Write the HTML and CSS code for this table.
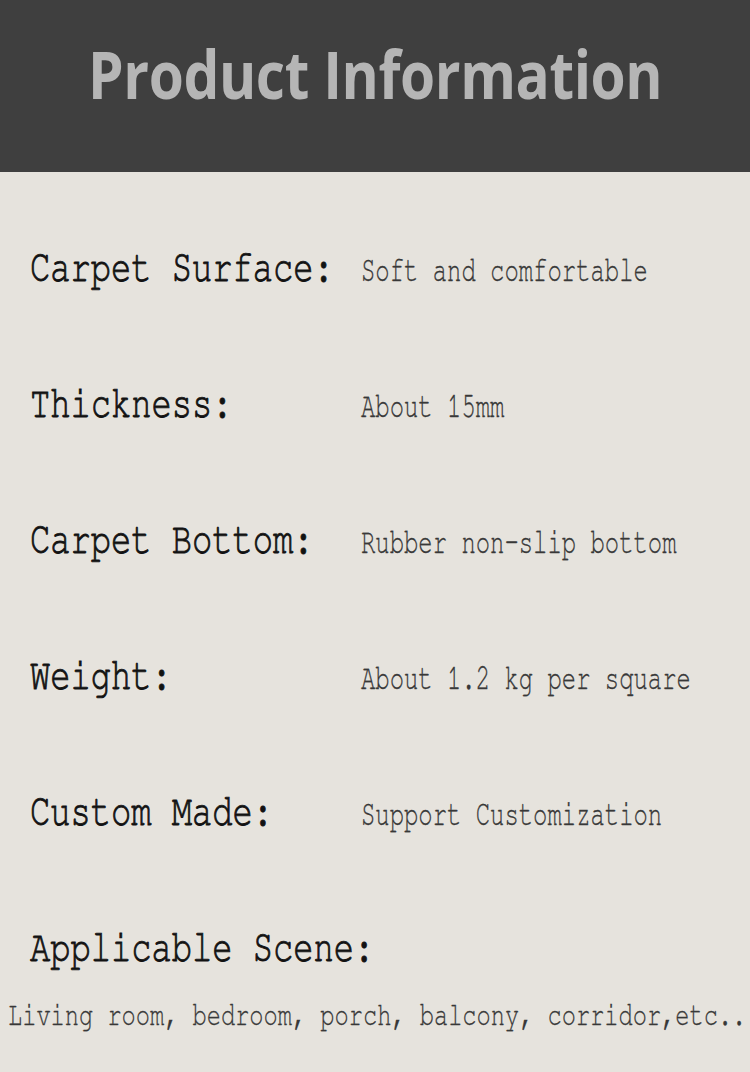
FILE: index.html
```html
<!DOCTYPE html>
<html lang="en">
<head>
<meta charset="utf-8">
<title>Product Information</title>
<link rel="stylesheet" href="styles.css">
</head>
<body>
<header class="banner">
  <h1 class="banner-title">Product Information</h1>
</header>
<main class="specs">
  <div class="row">
    <div class="label">Carpet Surface:</div>
    <div class="value">Soft and comfortable</div>
  </div>
  <div class="row">
    <div class="label">Thickness:</div>
    <div class="value">About 15mm</div>
  </div>
  <div class="row">
    <div class="label">Carpet Bottom:</div>
    <div class="value">Rubber non-slip bottom</div>
  </div>
  <div class="row">
    <div class="label">Weight:</div>
    <div class="value">About 1.2 kg per square</div>
  </div>
  <div class="row">
    <div class="label">Custom Made:</div>
    <div class="value">Support Customization</div>
  </div>
  <div class="scene">
    <div class="label">Applicable Scene:</div>
    <div class="scene-text">Living room, bedroom, porch, balcony, corridor,etc..</div>
  </div>
</main>
</body>
</html>
```

FILE: styles.css
```css
html, body {
  margin: 0;
  padding: 0;
}
body {
  width: 750px;
  height: 1072px;
  overflow: hidden;
  background: #e6e3dd;
}
.banner {
  box-sizing: border-box;
  height: 172px;
  background: #3f3f3f;
  padding-top: 40px;
}
.banner-title {
  margin: 0;
  font-family: "Open Sans", sans-serif;
  font-weight: 700;
  font-size: 67px;
  line-height: 67px;
  color: #b5b5b5;
  text-align: center;
  white-space: nowrap;
  transform: scaleX(0.848);
  transform-origin: 376px 0;
  letter-spacing: -0.5px;
}
.specs {
  display: flex;
  flex-direction: column;
  gap: 88px;
  padding-top: 73px;
}
.row {
  display: grid;
  grid-template-columns: 331px 1fr;
  align-items: baseline;
  padding-left: 30px;
}
.label,
.value,
.scene-text {
  font-family: "FreeMono", "Nimbus Mono PS", "Courier", monospace;
  line-height: 46px;
  white-space: nowrap;
  transform-origin: 0 0;
}
.label {
  font-size: 45px;
  color: #121212;
  -webkit-text-stroke: 0.9px #121212;
  transform: scaleX(0.75);
}
.value {
  font-size: 36px;
  color: #383838;
  -webkit-text-stroke: 0.3px #383838;
  transform: scaleX(0.664);
}
.scene {
  padding-left: 30px;
  display: flex;
  flex-direction: column;
  gap: 21px;
}
.scene-text {
  margin-left: -22px;
  font-size: 34px;
  color: #383838;
  -webkit-text-stroke: 0.3px #383838;
  transform: scaleX(0.696);
}
```
